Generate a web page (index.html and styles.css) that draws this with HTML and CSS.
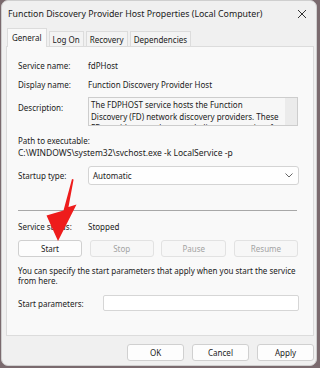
FILE: index.html
```html
<!DOCTYPE html>
<html>
<head>
<meta charset="utf-8">
<link rel="stylesheet" href="styles.css">
</head>
<body>
<div class="window">
  <div class="titlebar">
    <span class="title">Function Discovery Provider Host Properties (Local Computer)</span>
    <svg class="close" width="10" height="10" viewBox="0 0 10 10"><path d="M1 1 L9 9 M9 1 L1 9" stroke="#333" stroke-width="1" fill="none"/></svg>
  </div>
  <div class="tabs">
    <div class="tab active">General</div>
    <div class="tab">Log On</div>
    <div class="tab">Recovery</div>
    <div class="tab">Dependencies</div>
  </div>
  <div class="panel">
    <div class="row r1"><span class="label">Service name:</span><span class="value">fdPHost</span></div>
    <div class="row r2"><span class="label">Display name:</span><span class="value">Function Discovery Provider Host</span></div>
    <div class="row desc">
      <span class="label">Description:</span>
      <div class="descbox">
        <div class="desctext">The FDPHOST service hosts the Function<br>Discovery (FD) network discovery providers. These<br>FD providers supply network discovery services for</div>
        <div class="scroll"></div>
      </div>
    </div>
    <div class="pathlabel">Path to executable:</div>
    <div class="pathvalue">C:\WINDOWS\system32\svchost.exe -k LocalService -p</div>
    <div class="row startup">
      <span class="label">Startup type:</span>
      <div class="select">
        <span>Automatic</span>
        <svg class="chev" width="8" height="5" viewBox="0 0 8 5"><path d="M0.5 0.5 L4 4 L7.5 0.5" stroke="#555" stroke-width="0.9" fill="none"/></svg>
      </div>
    </div>
    <div class="sep"></div>
    <div class="row status"><span class="label">Service status:</span><span class="value">Stopped</span></div>
    <div class="btnrow">
      <div class="btn">Start</div>
      <div class="btn disabled">Stop</div>
      <div class="btn disabled">Pause</div>
      <div class="btn disabled">Resume</div>
    </div>
    <p class="para">You can specify the start parameters that apply when you start the service from here.</p>
    <div class="row params"><span class="plabel">Start parameters:</span><div class="input"></div></div>
  </div>
  <div class="footer">
    <div class="fbtn">OK</div>
    <div class="fbtn">Cancel</div>
    <div class="fbtn">Apply</div>
  </div>
  <svg class="arrow" width="40" height="70" viewBox="40 175 40 70">
    <polygon points="71,178 72.6,178.6 67.5,206 75.5,203.5 57,240 45.5,214.5 62.5,209.5" fill="#ee1c1c"/>
  </svg>
</div>
</body>
</html>
```
FILE: styles.css
```css
* { box-sizing: border-box; }
html, body { margin: 0; padding: 0; }
body {
  width: 320px;
  height: 368px;
  background: #7a6a6e;
  font-family: "Noto Sans", "Open Sans", sans-serif;
  font-size: 8px;
  color: #1b1b1b;
  overflow: hidden;
}
.window {
  position: relative;
  margin-left: 1px;
  width: 316px;
  height: 366px;
  background: #f0f0f0;
  border: 1px solid #cfcfcf;
  border-radius: 7px;
  display: flex;
  flex-direction: column;
}
.titlebar {
  height: 25px;
  display: flex;
  align-items: center;
  justify-content: space-between;
  padding: 0 9px 0 6px;
}
.title { font-size: 8.8px; color: #1a1a1a; white-space: nowrap; }
.close { display: block; }
.tabs {
  height: 20px;
  display: flex;
  align-items: flex-end;
  padding-left: 5px;
  position: relative;
  z-index: 1;
}
.tab {
  height: 15px;
  padding: 0 3px;
  margin-right: 2px;
  border: 1px solid #dcdcdc;
  border-bottom: none;
  background: #f3f3f3;
  display: flex;
  align-items: center;
}
.tab.active {
  height: 19px;
  background: #f9f9f9;
  margin-bottom: -1px;
  padding: 0 4px 2px;
}
.panel {
  margin: 0 2px 0 4px;
  height: 290px;
  background: #f9f9f9;
  border: 1px solid #dcdcdc;
  padding: 0 15px 0 11px;
  display: flex;
  flex-direction: column;
}
.row { display: flex; align-items: center; }
.label { width: 70px; flex: none; }
.r1 { margin-top: 11px; height: 14px; }
.r2 { margin-top: 5px; height: 14px; }
.desc { margin-top: 6px; height: 29px; align-items: flex-start; }
.desc .label { padding-top: 5px; }
.descbox {
  flex: 1;
  height: 29px;
  border: 1px solid #cdcdcd;
  background: #f7f7f7;
  display: flex;
  overflow: hidden;
}
.desctext {
  flex: 1;
  padding: 1px 2px 0 2px;
  line-height: 11.5px;
  white-space: nowrap;
  overflow: hidden;
}
.scroll { width: 12px; flex: none; background: #ebebeb; }
.pathlabel { margin-top: 9px; height: 12px; line-height: 12px; }
.pathvalue { height: 12px; line-height: 12px; white-space: nowrap; font-size: 8.5px; }
.startup { margin-top: 7px; height: 19px; }
.select {
  flex: 1;
  height: 19px;
  margin-right: -1px;
  background: #fefefe;
  border: 1px solid #d4d4d4;
  border-radius: 3px;
  display: flex;
  align-items: center;
  justify-content: space-between;
  padding: 0 5px 0 4px;
}
.chev { display: block; }
.sep { margin-top: 25px; height: 1px; background: #a8a8a8; margin-right: 1px; }
.status { margin-top: 8px; height: 14px; }
.btnrow {
  margin-top: 7px;
  display: grid;
  grid-template-columns: 64px 64px 65px 64px;
  justify-content: space-between;
  height: 17px;
}
.btn {
  border: 1px solid #d0d0d0;
  border-radius: 3px;
  background: #fdfdfd;
  display: flex;
  align-items: center;
  justify-content: center;
}
.btn.disabled {
  color: #a3a3a3;
  background: #f7f7f7;
  border-color: #e2e2e2;
}
.para { margin: 9px 0 0; line-height: 10px; }
.params { margin-top: 9px; height: 16px; }
.plabel { width: 85px; flex: none; }
.input {
  flex: 1;
  height: 16px;
  margin-right: -1px;
  background: #ffffff;
  border: 1px solid #d6d6d6;
  border-radius: 2px;
}
.footer {
  margin-top: 8px;
  display: flex;
  justify-content: flex-end;
  gap: 8px;
  padding-right: 2px;
}
.fbtn {
  width: 57px;
  height: 17px;
  border: 1px solid #d0d0d0;
  border-radius: 3px;
  background: #fdfdfd;
  display: flex;
  align-items: center;
  justify-content: center;
}
.arrow {
  position: absolute;
  left: 39px;
  top: 175px;
}
```
